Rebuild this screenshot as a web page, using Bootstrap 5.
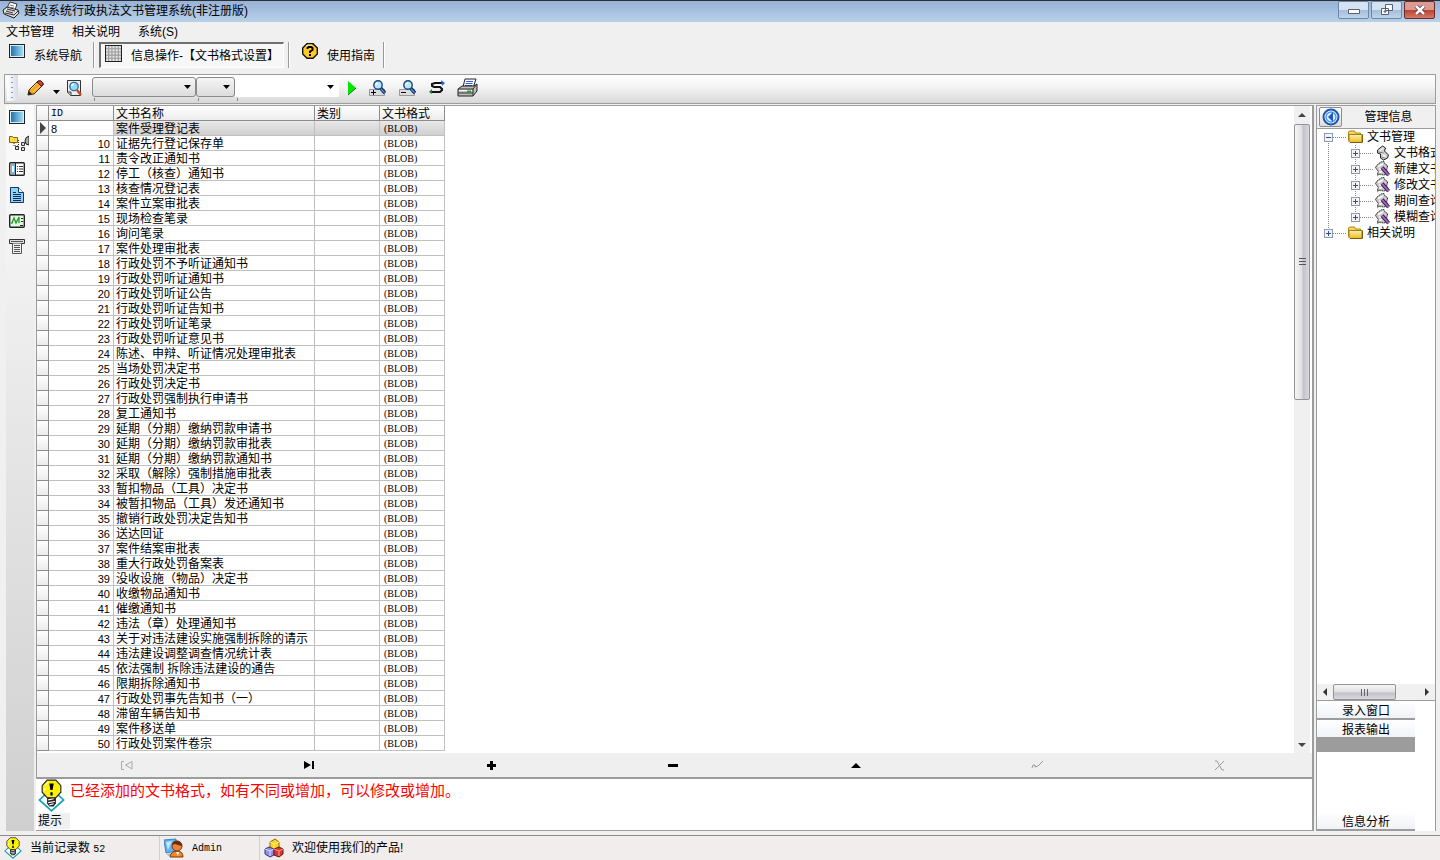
<!DOCTYPE html>
<html lang="zh-CN">
<head>
<meta charset="utf-8">
<meta name="viewport" content="width=device-width, initial-scale=1">
<title>建设系统行政执法文书管理系统</title>
<link href="https://cdn.jsdelivr.net/npm/bootstrap@5.3.0/dist/css/bootstrap.min.css" rel="stylesheet">
<style>
body{background:#f0f0f0;color:#000;font:12px/15px "Liberation Sans","Noto Sans CJK SC",sans-serif}
button,select{font:inherit;color:inherit}
svg{display:block;flex:none}
.plain{background:none;border:0;padding:0;color:#000;white-space:nowrap}
.mono{font:10px/15px "Liberation Mono","Noto Sans CJK SC",monospace}
/* title bar */
.titlebar{height:22px;background:linear-gradient(#97b2d5,#b8d0ea);border-top:1px solid #2b2f36;padding:0 1px 0 2px}
.caption-group{gap:2px}
.caption-btn{width:31px;height:18px;padding:0;border:1px solid #6f87a6;border-radius:2px;background:linear-gradient(#d5e2f1 48%,#a3bcd9 50%,#c0d5ec)}
.caption-btn.shut{border-color:#6b2b27;background:linear-gradient(#dd9a90 48%,#bd4030 50%,#d47a66)}
.menubar{height:19px;padding:3px 6px 0;gap:18px}
.menubar a{color:#000;text-decoration:none}
/* tab strip */
.modes{height:33px;padding:1px 0 6px 9px}
.modes button{gap:9px;line-height:17px}
.modes button span{padding-top:2px}
.sunk{height:26px;padding:0 4px;border:1px solid #fff;border-top:2px solid #707070;border-left:2px solid #707070;background:#f7f7f7}
.bar{width:2px;height:26px;border-left:1px solid #999;background:#fff;flex:none}
.bar-first{margin:0 4px 0 11px}
/* tool strip */
.tools{height:30px;margin:0 4px;padding:0 2px 2px;border:1px solid #9c9c9c;background:linear-gradient(#fff,#f4f4f4 40%,#d8d8d8)}
.grip{width:11px;height:26px;background:radial-gradient(circle,#8b9ccb 1px,transparent 1px) 3px 0/4px 5px repeat-y,linear-gradient(90deg,#fff,#d5dbe8)}
.pick-group{margin-top:2px;height:24px;padding-left:1px}
.pick-wrap{height:24px;background:linear-gradient(#888,#888) 2px 21px/1px 3px no-repeat}
.pick{display:block;appearance:none;height:20px;border:1px solid #8a8a8a;border-radius:3px;padding:0 14px 0 4px;background:url("data:image/svg+xml,%3Csvg xmlns='http://www.w3.org/2000/svg' width='7' height='4'%3E%3Cpath d='M0 0h7L3.500 4z'/%3E%3C/svg%3E") right 4px center no-repeat,linear-gradient(#f5f5f5,#dcdcdc)}
.pick.open-pick{background-color:#fff;background-image:url("data:image/svg+xml,%3Csvg xmlns='http://www.w3.org/2000/svg' width='7' height='4'%3E%3Cpath d='M0 0h7L3.500 4z'/%3E%3C/svg%3E");background-position:right 5px center;background-repeat:no-repeat;border:0;border-radius:0}
.w-long{width:104px}.w-short{width:39px}
/* work area */
.work{padding-top:1px}
.sidebar{width:28px;margin-left:6px;padding:4px 0 0 3px;gap:10px;background:linear-gradient(#fcfcfc,#e4e4e4 50%,#cfcfcf)}
.sidebar button{height:16px}
.center{margin-left:2px}
.sheet{border:1px solid #9c9c9c;border-width:1px 2px 0 1px;background:#fff}
.docs{width:408px;table-layout:fixed;border-collapse:separate;border-spacing:0}
.docs th,.docs td{height:15px;line-height:12px;padding:2px 2px 0;border:0 solid #c0c0c0;border-width:0 1px 1px 0;font-weight:400;white-space:nowrap;overflow:hidden}
.docs thead th{border-color:#8c8c8c;background:linear-gradient(#fff,#ececec)}
.docs tbody th{border-color:#8c8c8c;background:linear-gradient(#fff,#ececec);padding:0 0 0 3px}
.docs .num{font-size:11px;text-align:right;padding-right:3px}
.docs .blob{font-family:"Liberation Serif",serif;font-size:10px;padding-left:4px}
.docs .now td{background:linear-gradient(#e8e8e8,#d0d0d0)}
.docs .now td.num{background:#fff;text-align:left}
.vscroll{width:16px;margin-right:2px;background:#f0f0f0}
.hscroll{height:16px;background:#f0f0f0}
.thumb-v{height:276px;border:1px solid #949494;border-radius:2px;background:linear-gradient(90deg,#f5f5f5,#e2e2e4 45%,#c3c3cb 60%,#d8d8de)}
.thumb-h{width:63px;border:1px solid #949494;border-radius:2px;background:linear-gradient(#f5f5f5,#e2e2e4 45%,#c3c3cb 60%,#d8d8de)}
.recnav{height:24px;background:#efefef;border-left:1px solid #9c9c9c;border-right:2px solid #9c9c9c}
.recnav button{flex:1 1 0;padding-right:2px}
.hint{height:54px;border:1px solid #9c9c9c;border-width:2px 2px 1px 0;background:#fff;padding-left:2px}
.hint p{color:#f00;font-size:15px;line-height:23px}
.hint .tag{width:32px;background:#f0f0f0;height:16px;line-height:16px;margin-top:1px}
/* right panel */
.side{width:120px;margin:0 4px 0 2px;border:1px solid #9c9c9c;border-width:1px 1px 0 1px;background:#fff;overflow:hidden}
.side-head{height:23px;background:#f0f0f0;border-bottom:1px solid #9c9c9c;padding-left:2px}
.back{width:23px;height:20px;border:1px solid #8c8c8c;border-radius:2px;background:linear-gradient(#fff,#ddd);padding:0}
.tree,.tree ul{list-style:none;margin:0;padding:0}
.tree{padding-left:7px;background:repeating-linear-gradient(#888 0 1px,transparent 1px 2px) 11px 8px/1px calc(100% - 16px) no-repeat}
.tree ul{padding-left:27px;background:repeating-linear-gradient(#888 0 1px,transparent 1px 2px) 31px 0/1px calc(100% - 8px) no-repeat}
.node{height:16px;display:flex;align-items:center;white-space:nowrap}
.node i{width:14px;height:1px;background:repeating-linear-gradient(90deg,#888 0 1px,transparent 1px 2px);flex:none}
.node span{margin-left:3px}
.tw{width:9px;height:9px;border:1px solid #8f9aa8;background:linear-gradient(#2b4e9b,#2b4e9b) center/5px 1px no-repeat,#f4f4f4;padding:0;flex:none}
.tw.more{background:linear-gradient(#2b4e9b,#2b4e9b) center/5px 1px no-repeat,linear-gradient(#2b4e9b,#2b4e9b) center/1px 5px no-repeat,#f4f4f4}
.tabs-low{border-top:1px solid #9c9c9c}
.tabbtn{width:98px;height:19px;border:0;border-bottom:2px solid #9c9c9c;background:linear-gradient(#fff,#f0f2f6);padding:3px 0 0;line-height:14px}
.tabbtn.flat{height:17px;border:0}
.done{width:98px;height:15px;background:#9c9c9c}
.gapbox{height:60px}
.status{height:25px;margin-top:4px;border-top:1px solid #8c8c8c;background:#f0edec}
.status>div{border-right:1px solid #d4d0d0}
.status span{padding-top:1px}
.first{width:160px}.second{width:100px}
</style>
</head>
<body>
<svg width="0" height="0" class="position-absolute" aria-hidden="true">
 <defs>
  <linearGradient id="blue" x2="1"><stop stop-color="#2473a8"/><stop offset="1" stop-color="#9fdcf8"/></linearGradient>
  <linearGradient id="gold" x2="0" y2="1"><stop stop-color="#fff3a0"/><stop offset="1" stop-color="#e9b92c"/></linearGradient>
 </defs>
 <symbol id="screen" viewBox="0 0 16 14"><path fill="#222" d="M0 0h16v14H0z"/><path fill="#d8eefa" d="M1 1h14v12H1z"/><path fill="url(#blue)" d="M2 2h12v10H2z"/></symbol>
 <symbol id="folder" viewBox="0 0 16 14"><path d="M1 2l1-1h5l1 2h5v8H2L1 10z" fill="#f6d95b" stroke="#a8851a"/><path d="M1.500 4.500h13v7l-1 1h-11l-1-1z" fill="url(#gold)" stroke="#a27d12"/><path d="M3 12.500h12v-8" fill="none" stroke="#7a5c08"/></symbol>
 <symbol id="bulb" viewBox="0 0 24 30"><path d="M12 9l11 10-11 10L1 19z" fill="#fff" stroke="#13a2b2" stroke-width="1.500"/><path d="M8 17L3.500 12V6L8 1h8l4.500 5v6L16 17z" fill="#fff200" stroke="#222"/><path d="M6 6l3-3M6 8v3" stroke="#fff"/><path d="M10 4h4l-1 6h-2zM11 12h2v3h-2z"/><path d="M8 17h8v5l-2 3h-4l-2-3z" fill="#222"/><path d="M9 19l5-1M9 21.500l6-1M10 23.500l4-1" stroke="#fff"/></symbol>
 <symbol id="lens" viewBox="0 0 16 17"><circle cx="8" cy="5" r="4.200" fill="#b8e8ff" stroke="#1d4678" stroke-width="1.400"/><path d="M6 5q0-2 2-2" stroke="#fff" fill="none" stroke-width="1.500"/><path d="M11 8.500l4 4.500" stroke="#102a5c" stroke-width="3.500"/><path d="M11 9l3.500 3.500" stroke="#4e9be0" stroke-width="1.200"/></symbol>
 <symbol id="scroll" viewBox="0 0 16 16"><path d="M3 5l5-4 3 2-1 3 4 4-1 3-4 2-3-2V9L3 8z" fill="#d0d0d0" stroke="#222"/><path d="M5 6l4-3M7 8l4 4M8 12l3-2" stroke="#fff"/><path d="M4 7l5 1M7 12l3 1" stroke="#777"/></symbol>
 <symbol id="pageedit" viewBox="0 0 17 17"><path d="M1 7l2-3 4-3 3-.5L11 3l3 2-1 4 1 4-4 2-4-1-3 1 1-4z" fill="#c9c9c9" stroke="#222" stroke-dasharray="2 .6"/><path d="M4 6l5-3M5 9l2-1M5 12l3-1" stroke="#fff" stroke-width="1.500"/><path d="M8 7l7 8" stroke="#222" stroke-width="4"/><path d="M8 7l7 8" stroke="#b45ae0" stroke-width="2"/></symbol>
</svg>
<div class="d-flex flex-column min-vh-100">
 <header class="titlebar d-flex align-items-start">
  <svg width="18" height="18" viewBox="0 0 18 18"><path d="M5 7l3-6 7 2-2 6z" fill="#fff" stroke="#333"/><path d="M1 9l4-3 11 3 1 3-5 5L2 13z" fill="#ddd" stroke="#222"/><path d="M3 12l9 2 4-4M5 8l8 2M4 10l7 2" stroke="#333" fill="none"/><path d="M8 4l4 1M7 6l5 1" stroke="#777"/></svg>
  <span class="flex-fill ps-1 pt-1 lh-1 ms-1 ms-sm-0 px-2">建设系统行政执法文书管理系统(非注册版)</span>
  <div class="caption-group d-flex pe-1">
   <button class="caption-btn" aria-label="最小化"><svg class="mx-auto" width="12" height="10" viewBox="0 0 12 10"><path d="M.5 4.500h11v4H.5z" fill="#fff" stroke="#55617a"/></svg></button>
   <button class="caption-btn" aria-label="还原"><svg class="mx-auto" width="12" height="12" viewBox="0 0 12 12"><path d="M4.500.5h7v6h-7zM.5 4.500h7v6h-7zM3 7h2v1H3z" fill="#fff" stroke="#55617a"/></svg></button>
   <button class="caption-btn shut" aria-label="关闭"><svg class="mx-auto" width="12" height="10" viewBox="0 0 12 10"><path d="M2 1l8 8M10 1L2 9" stroke="#5a3030" stroke-width="4"/><path d="M2 1l8 8M10 1L2 9" stroke="#fff" stroke-width="2.500"/></svg></button>
  </div>
 </header>
 <nav class="menubar d-flex"><a href="#">文书管理</a><a href="#">相关说明</a><a href="#">系统(S)</a></nav>
 <div class="modes d-flex align-items-center">
  <button class="plain d-flex align-items-center"><svg class="mb-2" width="16" height="14"><use href="#screen"/></svg><span>系统导航</span></button>
  <span class="bar bar-first"></span>
  <button class="plain sunk d-flex align-items-center me-1"><svg class="mb-1" width="17" height="17" viewBox="0 0 16 16"><path fill="#e4e4e4" stroke="#222" d="M.5.5h15v15H.5z"/><path d="M3.500 1v14M6.500 1v14M9.500 1v14M12.500 1v14M1 3.500h14M1 6.500h14M1 9.500h14M1 12.500h14" stroke="#999"/></svg><span>信息操作-【文书格式设置】</span></button>
  <span class="bar me-2"></span>
  <button class="plain d-flex align-items-center ms-1"><svg class="mb-2" width="16" height="16" viewBox="0 0 16 16"><path d="M5 .7h6L15.300 5v6L11 15.300H5L.7 11V5z" fill="#ffc928" stroke="#111" stroke-width="1.400"/><path d="M4 3l2-1h4" stroke="#fff6b0" fill="none"/><path d="M5.500 6V5l1-1h3l1 1v2L8 8.500V10" fill="none" stroke="#000" stroke-width="2"/><path d="M7 11h2v2H7z"/></svg><span>使用指南</span></button>
  <span class="bar ms-2"></span>
 </div>
 <div class="tools d-flex align-items-center">
  <span class="grip me-2"></span>
  <button class="plain me-2" aria-label="编辑"><svg width="18" height="18" viewBox="0 0 18 18"><path d="M2 16l1-5L12 2h3l2 2v2l-9 9z" fill="#f5a623" stroke="#3a2500"/><path d="M12 2h3l2 2v2l-2 1-4-4z" fill="#e0402c" stroke="#4a1c10"/><path d="M5 10l6-6M7 13l7-6" stroke="#ffd873"/><path d="M2 16l1-4 3 3z" fill="#222"/></svg></button>
  <button class="plain me-1 pt-2" aria-label="更多"><svg width="9" height="5" viewBox="0 0 9 5"><path d="M1 0h7L4.500 4z"/></svg></button>
  <button class="plain me-1" aria-label="预览"><svg width="18" height="17" viewBox="0 0 18 17"><path d="M2.500.5h13v15h-10l-3-3z" fill="#eee" stroke="#333"/><path d="M2 12h4v4" fill="#bbb" stroke="#444"/><circle cx="9" cy="6.500" r="4.200" fill="#8fdcff" stroke="#2f6ea0" stroke-width="1.300"/><path d="M7 6q0-2 2-2" stroke="#fff" fill="none" stroke-width="1.500"/><path d="M12 10l4 5" stroke="#d2451e" stroke-width="2.500"/></svg></button>
  <div class="pick-group d-flex ms-1">
   <div class="pick-wrap"><select class="pick w-long" aria-label="字段"><option></option></select></div>
   <div class="pick-wrap"><select class="pick w-short" aria-label="条件"><option></option></select></div>
   <div class="pick-wrap"><select class="pick open-pick w-long" aria-label="值"><option></option></select></div>
  </div>
  <button class="plain ms-2 me-2" aria-label="执行"><svg width="10" height="16" viewBox="0 0 10 16"><path d="M1 1l8 7-8 7z" fill="#00e800"/><path d="M9 8l-8 7" stroke="#087808"/></svg></button>
  <button class="plain ms-1 me-2" aria-label="放大"><svg width="18" height="17" viewBox="0 0 18 17"><path fill="#ddd" stroke="#999" d="M.5 9.500h15v6H.5z"/><use href="#lens" x="1" width="16" height="17"/><path d="M2 12.500h5M4.500 10v5" stroke="#000"/></svg></button>
  <button class="plain ms-1 me-2" aria-label="缩小"><svg width="18" height="17" viewBox="0 0 18 17"><path fill="#ddd" stroke="#999" d="M.5 9.500h15v6H.5z"/><use href="#lens" x="1" width="16" height="17"/><path d="M2 12.500h5" stroke="#000"/></svg></button>
  <button class="plain ms-1 me-2" aria-label="刷新"><svg width="16" height="16" viewBox="0 0 16 16"><path d="M14 3H6L3 4v2l2 1h6l2 2v1l-2 2H2" fill="none" stroke="#111" stroke-width="2"/><path d="M12 0l4 3-3 3z" fill="#2a62ee"/><path d="M3 9v5l-3-2z" fill="#158015"/></svg></button>
  <button class="plain ms-1" aria-label="打印"><svg width="21" height="20" viewBox="0 0 21 20"><path d="M6 9l2-8h11l-3 9z" fill="#fff" stroke="#222"/><path d="M9 3.500h7M8.500 5.500h7M8 7.500h7" stroke="#3557dd"/><path d="M1 11l4-3h12l3-2v7l-4 5H1z" fill="#bdbdbd" stroke="#222"/><path d="M1 11h15l4-5M16 11v7M1 15h15" fill="none" stroke="#333"/><path d="M2 12.500h13" stroke="#fff"/><path d="M10 13.500h4" stroke="#1a1" stroke-width="2"/></svg></button>
 </div>

 <main class="work d-flex flex-fill">
  <aside class="sidebar d-flex flex-column">
   <button class="plain d-flex align-items-center" aria-label="窗口"><svg width="16" height="14"><use href="#screen"/></svg></button>
   <button class="plain d-flex align-items-center" aria-label="导航树"><svg width="20" height="16" viewBox="0 0 20 16"><path d="M.5 1.500h3l1 1h4v5h-8z" fill="#ffd84a" stroke="#8a6400"/><path d="M5 8v3h5M9.500 5v8" stroke="#333" stroke-dasharray="1 1" fill="none"/><path d="M12.500 7.500h3v3h-3zM12.500 12.500h3v3h-3zM6.500 11.500h3v3h-3z" fill="#ddd" stroke="#333"/><path d="M20 1q-4 1-4 5t4 4z" fill="#aaa" stroke="#222"/></svg></button>
   <button class="plain d-flex align-items-center" aria-label="列表"><svg width="16" height="14" viewBox="0 0 16 14"><rect x=".7" y=".7" width="14.600" height="12.600" rx="1" fill="#fff" stroke="#222" stroke-width="1.400"/><path fill="#6db6e4" d="M2 2h4v10H2z"/><path fill="#fff" d="M3 4h2v6H3z"/><path d="M6.500 1v12" stroke="#222"/><path d="M8 4.500h1M10 4.500h4M8 7h1M10 7h4M8 9.500h1M10 9.500h4" stroke="#333"/></svg></button>
   <button class="plain d-flex align-items-center" aria-label="文档"><svg width="16" height="16" viewBox="0 0 16 16"><path d="M1.500.5h8l5 5v10h-13z" fill="#8fd0f6" stroke="#123a60"/><path d="M9.500.5v5h5" fill="#e8f7ff" stroke="#123a60"/><path d="M4 5.500h3M4 7.500h8M4 9.500h8M4 11.500h8M4 13.500h8" stroke="#0b2c50"/></svg></button>
   <button class="plain d-flex align-items-center" aria-label="图表"><svg width="16" height="14" viewBox="0 0 16 14"><rect x=".7" y=".7" width="14.600" height="12.600" rx="1" fill="#e9f5e9" stroke="#222" stroke-width="1.400"/><path d="M2 9h1l2-5 2 5 3-6v6" fill="none" stroke="#18a018" stroke-width="1.300"/><path d="M12 4.500h2M12 7.500h2M11 11.500h3" stroke="#222"/></svg></button>
   <button class="plain d-flex align-items-center" aria-label="报表"><svg width="16" height="16" viewBox="0 0 16 16"><path d="M.5.5h15v4H.5z" fill="#ddd" stroke="#333"/><path d="M3.500 4.500v10h9v-10" fill="#eee" stroke="#555"/><path d="M2 2.500h12M5 6.500h6M5 8.500h6M5 10.500h6M5 12.500h6" stroke="#555"/></svg></button>
  </aside>

  <section class="center d-flex flex-column flex-fill">
   <div class="d-flex flex-column flex-fill">
    <div class="sheet d-flex flex-fill">
     <div class="flex-fill">
      <table class="docs">
       <colgroup><col style="width:12px"><col style="width:65px"><col style="width:201px"><col style="width:65px"><col style="width:65px"></colgroup>
       <thead><tr><th></th><th class="mono">ID</th><th>文书名称</th><th>类别</th><th>文书格式</th></tr></thead>
       <tbody id="rows"></tbody>
      </table>
     </div>
     <div class="vscroll d-flex flex-column">
      <svg class="mx-auto my-1" width="8" height="10" viewBox="0 0 8 10"><path d="M0 7h8L4 3z" fill="#444"/></svg>
      <div class="thumb-v d-flex align-items-center justify-content-center"><svg width="7" height="8" viewBox="0 0 7 8"><path d="M0 .5h7M0 3.500h7M0 6.500h7" stroke="#555"/></svg></div>
      <svg class="mx-auto mt-auto mb-1" width="8" height="8" viewBox="0 0 8 8"><path d="M0 2h8L4 6z" fill="#444"/></svg>
     </div>
    </div>
    <div class="recnav d-flex">
     <button class="plain" aria-label="首条" disabled><svg class="mx-auto" width="12" height="10" viewBox="0 0 12 10"><path d="M3 1.500H.5v8H3M11 1.500L4.500 5l6.500 4z" fill="none" stroke="#aaa"/></svg></button>
     <button class="plain" aria-label="末条"><svg class="mx-auto" width="10" height="8" viewBox="0 0 10 8"><path d="M0 0l7 4-7 4zM8 0h2v8H8z"/></svg></button>
     <button class="plain" aria-label="增加"><svg class="mx-auto" width="9" height="9" viewBox="0 0 9 9"><path d="M3 0h3v3h3v3H6v3H3V6H0V3h3z"/></svg></button>
     <button class="plain" aria-label="删除"><svg class="mx-auto" width="10" height="3"><path d="M0 0h10v3H0z"/></svg></button>
     <button class="plain" aria-label="修改"><svg class="mx-auto" width="10" height="5" viewBox="0 0 10 5"><path d="M0 5h10L5 0z"/></svg></button>
     <button class="plain" aria-label="确认" disabled><svg class="mx-auto" width="13" height="10" viewBox="0 0 13 10"><path d="M1 8l1-3h2v2l3-1 5-5" fill="none" stroke="#999"/></svg></button>
     <button class="plain" aria-label="取消" disabled><svg class="mx-auto" width="11" height="11" viewBox="0 0 11 11"><path d="M1 1h2l5 9h2M10 1L1 10" fill="none" stroke="#999"/></svg></button>
    </div>
   </div>
   <div class="hint d-flex">
    <div><svg width="27" height="33"><use href="#bulb"/></svg><div class="tag">提示</div></div>
    <p class="mb-0">已经添加的文书格式，如有不同或增加，可以修改或增加。</p>
   </div>
  </section>

  <aside class="side d-flex flex-column">
   <div class="side-head d-flex align-items-center">
    <button class="back" aria-label="返回"><svg class="mx-auto" width="18" height="18" viewBox="0 0 18 18"><circle cx="9" cy="9" r="7.500" fill="#fff" stroke="#1c55b4" stroke-width="2"/><circle cx="9" cy="9" r="5" fill="#e3f1ff" stroke="#4d9be8" stroke-width="1.500"/><path d="M11 4v10L6 9z" fill="#1a5bd0"/></svg></button>
    <span class="flex-fill text-center">管理信息</span>
   </div>
   <ul class="tree">
    <li><div class="node"><button class="tw" aria-label="折叠"></button><i></i><svg width="17" height="14"><use href="#folder"/></svg><span>文书管理</span></div>
     <ul id="kids"></ul></li>
    <li><div class="node"><button class="tw more" aria-label="展开"></button><i></i><svg width="17" height="14"><use href="#folder"/></svg><span>相关说明</span></div></li>
   </ul>
   <div class="hscroll d-flex mt-auto justify-content-between">
    <svg class="my-auto ms-1 me-1" width="8" height="8" viewBox="0 0 8 8"><path d="M6 0v8L2 4z" fill="#333"/></svg>
    <div class="thumb-h d-flex align-items-center justify-content-center me-auto"><svg width="8" height="7" viewBox="0 0 8 7"><path d="M.5 0v7M3.500 0v7M6.500 0v7" stroke="#666"/></svg></div>
    <svg class="my-auto me-1" width="8" height="8" viewBox="0 0 8 8"><path d="M2 0v8l4-4z" fill="#333"/></svg>
   </div>
   <div class="tabs-low">
    <button class="tabbtn d-block">录入窗口</button>
    <button class="tabbtn flat d-block">报表输出</button>
    <div class="done"></div>
   </div>
   <div class="gapbox"></div>
   <button class="tabbtn">信息分析</button>
  </aside>
 </main>

 <footer class="status d-flex">
  <div class="d-flex align-items-center first"><svg class="ms-1" width="18" height="22"><use href="#bulb"/></svg><span class="ps-2">当前记录数 <span class="mono">52</span></span></div>
  <div class="d-flex align-items-center second"><svg class="ms-1 me-2" width="20" height="20" viewBox="0 0 20 20"><path d="M0 2l12-1v12L2 15z" fill="#5fb4ee" stroke="#3584c4"/><path d="M2 4l6-1-4 9z" fill="#c4e8ff"/><path d="M3 16l6-1v2l-5 1z" fill="#9bbbd4"/><path d="M6 19q1-6 7-6t6 6z" fill="#f08a24" stroke="#7d3410"/><circle cx="13" cy="8" r="5" fill="#e98338" stroke="#7d3410"/><path d="M8 7q1-5 6-4 4 1 4 5-5-1-7-2z" fill="#6b2c10"/><path d="M12 14l2 4 1-4z" fill="#fff"/></svg><span class="mono">Admin</span></div>
  <div class="d-flex align-items-center border-0"><svg class="ms-1" width="20" height="20" viewBox="0 0 20 20"><path d="M6 4l5-3 4 3v6l-5 2-4-3z" fill="#ffd31c" stroke="#8e6a00"/><path d="M6 4l4 2 5-2M10 6v5" stroke="#fff199" fill="none"/><path d="M1 11l4-2 5 2v6l-4 2-5-3z" fill="#8f92e8" stroke="#35357a"/><path d="M1 11l5 2 4-2M6 13v5" stroke="#dedfff" fill="none"/><path d="M10 11l5-2 4 2v5l-4 3-5-2z" fill="#d13c32" stroke="#6f1414"/><path d="M10 11l5 2 4-2M15 13v5" stroke="#ff9d90" fill="none"/></svg><span class="ps-2">欢迎使用我们的产品!</span></div>
 </footer>
</div>
<script>
const names = `案件受理登记表|证据先行登记保存单|责令改正通知书|停工（核查）通知书|核查情况登记表|案件立案审批表|现场检查笔录|询问笔录|案件处理审批表|行政处罚不予听证通知书|行政处罚听证通知书|行政处罚听证公告|行政处罚听证告知书|行政处罚听证笔录|行政处罚听证意见书|陈述、申辩、听证情况处理审批表|当场处罚决定书|行政处罚决定书|行政处罚强制执行申请书|复工通知书|延期（分期）缴纳罚款申请书|延期（分期）缴纳罚款审批表|延期（分期）缴纳罚款通知书|采取（解除）强制措施审批表|暂扣物品（工具）决定书|被暂扣物品（工具）发还通知书|撤销行政处罚决定告知书|送达回证|案件结案审批表|重大行政处罚备案表|没收设施（物品）决定书|收缴物品通知书|催缴通知书|违法（章）处理通知书|关于对违法建设实施强制拆除的请示|违法建设调整调查情况统计表|依法强制 拆除违法建设的通告|限期拆除通知书|行政处罚事先告知书（一）|滞留车辆告知书|案件移送单|行政处罚案件卷宗`.split('|');
document.getElementById('rows').innerHTML = names.map((n, i) =>
 `<tr class="${i ? '' : 'now'}"><th>${i ? '' : '<svg width="6" height="12" viewBox="0 0 6 12"><path d="M0 0l6 6-6 6z" fill="#444"/></svg>'}</th><td class="num">${i ? i + 9 : 8}</td><td>${n}</td><td></td><td class="blob">(BLOB)</td></tr>`).join('');
document.getElementById('kids').innerHTML = ['文书格式', '新建文书', '修改文书', '期间查询', '模糊查询'].map((n, i) =>
 `<li class="node"><button class="tw more" aria-label="展开"></button><i></i><svg width="17" height="16"><use href="#${i ? 'pageedit' : 'scroll'}"/></svg><span class="${i ? '' : 'bg-body-tertiary'}">${n}</span></li>`).join('');
</script>
<script src="https://cdn.jsdelivr.net/npm/bootstrap@5.3.0/dist/js/bootstrap.bundle.min.js"></script>
</body>
</html>
